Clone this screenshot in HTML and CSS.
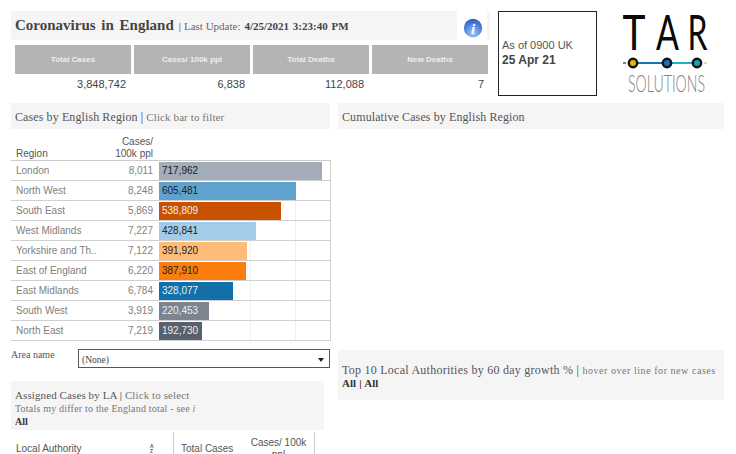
FILE: index.html
```html
<!DOCTYPE html>
<html lang="en">
<head>
<meta charset="utf-8">
<title>Coronavirus in England</title>
<link rel="stylesheet" href="styles.css">
</head>
<body>
<div class="page">
  <header class="top">
    <div class="summary">
      <div class="title-row">
        <div class="title-bar">
          <span class="title">Coronavirus in England</span>
          <span class="title-sep">|</span>
          <span class="title-note">Last Update:</span>
          <b class="title-date">4/25/2021 3:23:40 PM</b>
        </div>
        <svg class="info" width="20" height="20" viewBox="0 0 20 20" role="img" aria-label="Information">
          <defs>
            <radialGradient id="ig" cx="0.5" cy="0.8" r="0.75">
              <stop offset="0" stop-color="#a4c8f5"/>
              <stop offset="0.55" stop-color="#5a8fe0"/>
              <stop offset="1" stop-color="#2f62c6"/>
            </radialGradient>
          </defs>
          <circle cx="10" cy="10" r="9.2" fill="url(#ig)"/>
          <text x="10" y="15.5" text-anchor="middle" class="info-i">i</text>
        </svg>
        <div class="title-tail"></div>
      </div>
      <div class="kpis">
        <div class="kpi"><div class="kpi-label">Total Cases</div><div class="kpi-value">3,848,742</div></div>
        <div class="kpi"><div class="kpi-label">Cases/ 100k ppl</div><div class="kpi-value">6,838</div></div>
        <div class="kpi"><div class="kpi-label">Total Deaths</div><div class="kpi-value">112,088</div></div>
        <div class="kpi"><div class="kpi-label">New Deaths</div><div class="kpi-value">7</div></div>
      </div>
    </div>
    <div class="asof">
      <div>As of 0900 UK</div>
      <b>25 Apr 21</b>
    </div>
    <svg class="logo" width="94" height="96" viewBox="0 0 94 96" role="img" aria-label="TAR Solutions">
      <text x="16" y="50" text-anchor="middle" textLength="23" lengthAdjust="spacingAndGlyphs" class="logo-tar">T</text>
      <text x="49.5" y="50" text-anchor="middle" textLength="23" lengthAdjust="spacingAndGlyphs" class="logo-tar">A</text>
      <text x="79.5" y="50" text-anchor="middle" textLength="20" lengthAdjust="spacingAndGlyphs" class="logo-tar">R</text>
      <path d="M5 63h3" stroke="#555" stroke-width="1.5"/>
      <path d="M86 63h3" stroke="#aaa" stroke-width="1"/>
      <path d="M15 63h34" stroke="#1273b5" stroke-width="2"/>
      <path d="M49 63h30" stroke="#1fb3c4" stroke-width="2"/>
      <circle cx="15" cy="63" r="4.2" fill="#f0b400" stroke="#111" stroke-width="2.4"/>
      <circle cx="49" cy="63" r="4.2" fill="#1273b5" stroke="#111" stroke-width="2.4"/>
      <circle cx="79" cy="63" r="4.2" fill="#14a3b4" stroke="#111" stroke-width="2.4"/>
      <text x="48.5" y="92" text-anchor="middle" textLength="77" lengthAdjust="spacingAndGlyphs" class="logo-sol">SOLUTIONS</text>
    </svg>
  </header>

  <main class="main">
    <section class="left">
      <h2 class="section-head">Cases by English Region <span class="sep">|</span> <span class="muted">Click bar to filter</span></h2>
      <div class="region-table">
        <div class="region-head">
          <div class="rh-name">Region</div>
          <div class="rh-num">Cases/<br>100k ppl</div>
        </div>
        <div class="row"><div class="r-name">London</div><div class="r-num">8,011</div><div class="r-cell"><div class="bar dark-text" style="width:163px;background:#a3acb9">717,962</div></div></div>
        <div class="row"><div class="r-name">North West</div><div class="r-num">8,248</div><div class="r-cell"><div class="bar dark-text" style="width:137px;background:#5fa2ce">605,481</div></div></div>
        <div class="row"><div class="r-name">South East</div><div class="r-num">5,869</div><div class="r-cell"><div class="bar light-text" style="width:122px;background:#c85200">538,809</div></div></div>
        <div class="row"><div class="r-name">West Midlands</div><div class="r-num">7,227</div><div class="r-cell"><div class="bar dark-text" style="width:97px;background:#a3cce9">428,841</div></div></div>
        <div class="row"><div class="r-name">Yorkshire and Th..</div><div class="r-num">7,122</div><div class="r-cell"><div class="bar dark-text" style="width:88px;background:#ffbc79">391,920</div></div></div>
        <div class="row"><div class="r-name">East of England</div><div class="r-num">6,220</div><div class="r-cell"><div class="bar dark-text" style="width:87px;background:#fc7d0b">387,910</div></div></div>
        <div class="row"><div class="r-name">East Midlands</div><div class="r-num">6,784</div><div class="r-cell"><div class="bar light-text" style="width:74px;background:#1170aa">328,077</div></div></div>
        <div class="row"><div class="r-name">South West</div><div class="r-num">3,919</div><div class="r-cell"><div class="bar light-text" style="width:50px;background:#7b848f">220,453</div></div></div>
        <div class="row"><div class="r-name">North East</div><div class="r-num">7,219</div><div class="r-cell"><div class="bar light-text" style="width:43px;background:#57606c">192,730</div></div></div>
      </div>

      <div class="filter">
        <span class="filter-label">Area name</span>
        <div class="select"><span>(None)</span><span class="caret"></span></div>
      </div>

      <div class="assigned">
        <div class="a-line1">Assigned Cases by LA <span class="sep">|</span> <span class="muted">Click to select</span></div>
        <div class="a-line2">Totals my differ to the England total - see <i>i</i></div>
        <div class="a-line3">All</div>
      </div>

      <div class="la-head">
        <div class="la-name">Local Authority</div>
        <div class="la-sort"><span>A</span><span>Z</span></div>
        <div class="la-cases">Total Cases</div>
        <div class="la-rate">Cases/ 100k ppl</div>
      </div>
    </section>

    <section class="right">
      <h2 class="section-head wide">Cumulative Cases by English Region</h2>
      <div class="chart-blank"></div>
      <div class="top10">
        <div class="t-line1">Top 10 Local Authorities by 60 day growth % <span class="sep">|</span> <span class="muted">hover over line for new cases</span></div>
        <div class="t-line2">All | All</div>
      </div>
    </section>
  </main>
</div>
</body>
</html>
```

FILE: styles.css
```css
* { box-sizing: border-box; }
html, body { margin: 0; padding: 0; background: #fff; }
.page {
  width: 736px;
  height: 454px;
  overflow: hidden;
  padding: 11px 12px 0 11px;
  font-family: "Liberation Sans", Arial, sans-serif;
  color: #555;
}

/* top band */
.top { display: flex; height: 85px; }
.summary { width: 479px; }
.title-row { display: flex; height: 29px; }
.title-bar {
  width: 446px;
  background: #f5f5f5;
  display: flex;
  align-items: center;
  padding-left: 4px;
  font-family: "Liberation Serif", "Times New Roman", serif;
  white-space: pre;
}
.title { font-size: 15px; font-weight: bold; color: #444; word-spacing: 2px; }
.title-sep { font-size: 11px; margin-left: 5px; color: #333; }
.title-note { font-size: 11px; margin-left: 3px; color: #666; }
.title-date { font-size: 11px; margin-left: 4px; color: #444; word-spacing: 1px; }
.info { margin: 7px 0 0 6px; flex: none; }
.info-i { font: italic bold 15px "Liberation Serif", serif; fill: #fff; }
.title-tail { width: 3px; margin-left: 4px; background: #f5f5f5; }

.kpis {
  display: grid;
  grid-template-columns: repeat(4, 116px);
  column-gap: 3px;
  margin: 5px 0 0 4px;
}
.kpi-label {
  height: 29px;
  background: #b4b4b4;
  color: #eee;
  font-size: 8px;
  font-weight: bold;
  display: flex;
  align-items: center;
  justify-content: center;
}
.kpi-value {
  text-align: right;
  font-size: 11px;
  color: #444;
  margin-top: 3px;
  padding-right: 5px;
  line-height: 14px;
}
.kpi:last-child .kpi-value { padding-right: 4px; }

.asof {
  width: 99px;
  height: 85px;
  margin-left: 8px;
  border: 1px solid #222;
  padding: 0 0 2px 3px;
  font-size: 11px;
  line-height: 15px;
  color: #555;
  display: flex;
  flex-direction: column;
  justify-content: center;
}
.asof b { color: #444; font-size: 12px; }

.logo { margin: -11px 0 0 21px; flex: none; overflow: visible; }
.logo-tar { font: 400 49px "Lato", "Liberation Sans", sans-serif; fill: #0a0a0a; }
.logo-sol { font: 300 23.5px "Lato", "Liberation Sans", sans-serif; fill: #808080; }

/* main */
.main { display: flex; margin-top: 7px; gap: 7px; }
.left { width: 320px; flex: none; }
.right { width: 386px; flex: none; }

.section-head {
  margin: 0;
  height: 26px;
  width: 319px;
  background: #f5f5f5;
  padding: 1px 0 0 4px;
  font: normal 12px/26px "Liberation Serif", "Times New Roman", serif;
  letter-spacing: .1px;
  color: #555;
}
.section-head.wide { width: 386px; }
.section-head .muted { font-size: 11px; letter-spacing: .1px; }
.sep { color: #333; }
.muted { color: #777; }

/* region table */
.region-table { margin-top: 6px; }
.region-head {
  display: flex;
  height: 26px;
  align-items: flex-end;
  font-size: 10px;
  line-height: 12px;
  color: #555;
  border-bottom: 1px solid #ccc;
}
.rh-name { width: 70px; padding-left: 5px; }
.rh-num { width: 72px; text-align: right; }

.row {
  display: grid;
  grid-template-columns: 105px 37px 178px;
  height: 20px;
  border-bottom: 1px solid #d0d0d0;
  font-size: 10px;
  align-items: center;
  color: #808080;
}
.r-name { padding-left: 5px; white-space: nowrap; overflow: hidden; }
.r-num { text-align: right; font-size: 10px; }
.r-cell {
  height: 100%;
  margin-left: 6px;
  padding: 1px 0 0;
  border-right: 1px solid #d0d0d0;
  background:
    linear-gradient(#f0f0f0, #f0f0f0) 91px 0 / 1px 100% no-repeat,
    linear-gradient(#f0f0f0, #f0f0f0) 136px 0 / 1px 100% no-repeat;
}
.bar {
  height: 18px;
  padding-left: 3px;
  line-height: 18px;
  font-size: 10px;
  white-space: nowrap;
}
.dark-text { color: #222; }
.light-text { color: #eee; }

/* filter */
.filter { display: flex; margin-top: 8px; height: 19px; }
.filter-label {
  width: 67px;
  font: 10px/12px "Liberation Serif", "Times New Roman", serif;
  color: #555;
}
.select {
  width: 252px;
  height: 19px;
  border: 1px solid #555;
  display: flex;
  align-items: center;
  justify-content: space-between;
  padding: 2px 5px 0 3px;
  font: 9.5px "Liberation Serif", "Times New Roman", serif;
  color: #444;
}
.caret {
  width: 0;
  height: 0;
  border-left: 3px solid transparent;
  border-right: 3px solid transparent;
  border-top: 4px solid #222;
}

/* assigned */
.assigned {
  width: 313px;
  height: 49px;
  margin-top: 13px;
  background: #f5f5f5;
  padding: 8px 4px 0;
  font-family: "Liberation Serif", "Times New Roman", serif;
  color: #555;
}
.a-line1 { font-size: 11px; line-height: 13px; letter-spacing: .1px; }
.a-line2 { font-size: 10px; line-height: 13px; letter-spacing: .2px; color: #777; }
.a-line3 { font-size: 10px; line-height: 13px; font-weight: bold; color: #333; }

.la-head {
  display: grid;
  grid-template-columns: 134px 28px 70px 72px;
  margin-top: 2px;
  height: 34px;
  font-size: 10px;
  color: #555;
}
.la-name { padding: 11px 0 0 5px; }
.la-sort {
  display: flex;
  flex-direction: column;
  font-size: 5px;
  line-height: 5px;
  font-weight: bold;
  padding: 12px 0 0 5px;
}
.la-cases { padding: 11px 0 0 7px; border-left: 1px solid #ccc; }
.la-rate { padding: 5px 2px 0; text-align: center; line-height: 12px; border-right: 1px solid #ccc; }

/* right */
.chart-blank { height: 221px; }
.top10 {
  height: 50px;
  background: #f5f5f5;
  padding: 14px 4px 0;
  font-family: "Liberation Serif", "Times New Roman", serif;
}
.t-line1 { font-size: 12px; line-height: 13px; letter-spacing: .25px; color: #555; white-space: nowrap; }
.t-line1 .muted { font-size: 10px; letter-spacing: .55px; }
.t-line2 { font-size: 11px; line-height: 12px; font-weight: bold; color: #333; word-spacing: .5px; }
```
